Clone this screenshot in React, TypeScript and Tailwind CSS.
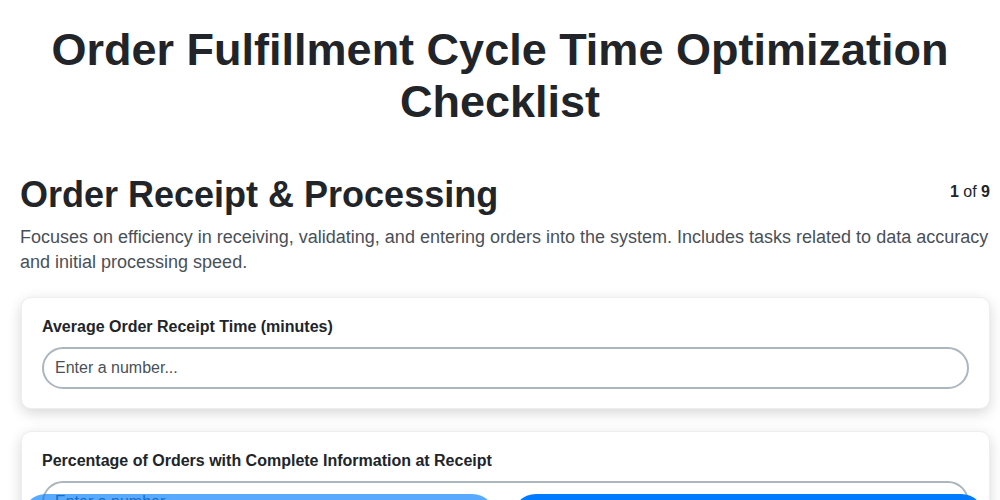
import React from 'react';

const questions = [
  { label: 'Average Order Receipt Time (minutes)' },
  { label: 'Percentage of Orders with Complete Information at Receipt' },
  { label: 'Average Order Validation Time (minutes)' },
];

export default function App() {
  return (
    <main className="min-h-screen bg-white text-[#212529] font-['Liberation_Sans',Arial,sans-serif]">
      <div className="pl-5 pr-[10px] pt-[24px] pb-24">
        <div className="pr-[10px]">
          <h1 className="mx-auto max-w-[940px] text-center text-[45px] font-bold leading-[52px] text-[#212529]">
            Order Fulfillment Cycle Time Optimization Checklist
          </h1>
        </div>

        {/* SECTION HEADER */}
        <div className="mt-[45px] flex items-start justify-between">
          <h2 className="text-[36px] font-bold leading-[44px] text-[#212529]">Order Receipt &amp; Processing</h2>
          <div className="mt-[7px] text-[16px] text-[#212529]">
            <span className="font-bold">1</span> of <span className="font-bold">9</span>
          </div>
        </div>
        <p className="mt-[8px] text-[18px] leading-[25px] text-[#495057]">
          Focuses on efficiency in receiving, validating, and entering orders into the system. Includes tasks related to data accuracy and initial processing speed.
        </p>

        {/* QUESTIONS */}
        <div className="mt-[22px] flex flex-col gap-[22px] pl-px">
          {questions.map((q, i) => (
            <div
              key={i}
              className="rounded-[10px] border border-[#eceef1] bg-white px-[20px] pt-[20px] pb-[19px] shadow-[0_4px_14px_rgba(0,0,0,0.16)]"
            >
              <label className="block text-[16px] font-bold leading-[18px] text-[#212529]">{q.label}</label>
              <input
                type="text"
                placeholder="Enter a number..."
                className="mt-[11px] block h-[42px] w-full rounded-full border-2 border-[#adb5bd] bg-white px-[11px] text-[16px] text-[#495057] placeholder:text-[#495057] outline-none"
              />
            </div>
          ))}
        </div>
      </div>

      {/* NAV BUTTONS */}
      <div className="fixed left-0 right-0 top-[494px] flex gap-4 pl-[22px] pr-[15px]">
        <button className="h-[48px] flex-1 rounded-full bg-[#007bff] font-bold text-white opacity-65">
          Previous
        </button>
        <button className="h-[48px] flex-1 rounded-full bg-[#007bff] font-bold text-white">
          Next
        </button>
      </div>
    </main>
  );
}
